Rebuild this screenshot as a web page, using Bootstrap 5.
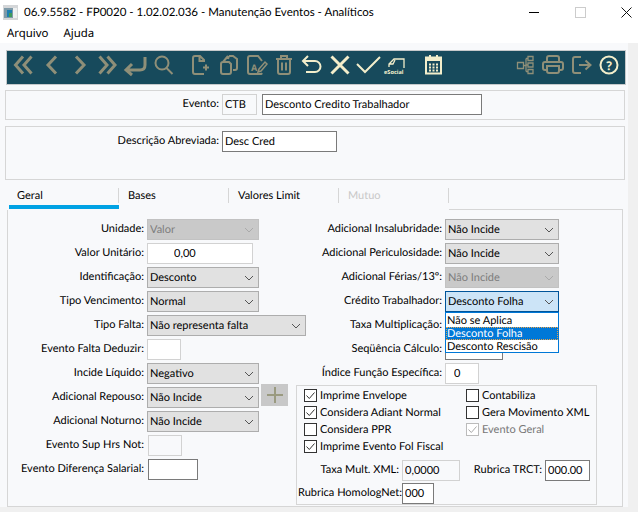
<!DOCTYPE html>
<html lang="pt"><head><meta charset="utf-8"><title>Manutenção Eventos</title>
<link rel="stylesheet" href="https://cdn.jsdelivr.net/npm/bootstrap@5.3.0/dist/css/bootstrap.min.css">
<style>
html,body{height:512px;overflow:hidden}
body{background:#f0f0f0;font-family:Lato,"Noto Sans",sans-serif;font-size:11px;color:#000;line-height:1.2;text-rendering:geometricPrecision}
input,select{text-rendering:geometricPrecision}
.titlebar{height:25px;background:#fff;padding-left:3px}
.titlebar .ttl{margin-left:6px;font-size:11.5px}
.winbtn{width:46px;height:25px}
.winbtn-last{width:24px;margin-left:11px}
.menubar{height:18px;background:#fff;padding-left:7px;gap:15px;font-size:11.4px;font-family:"Noto Sans",sans-serif}
.workarea{width:628px;height:464px;background:#f8f9fb;padding:7px 0 0 0}
.toolbar{height:35px;width:620px;margin-left:6px;background:#174a5c;border:1px solid #c6c9cb;padding:0 2px;overflow:hidden}
.tcell{width:28px;height:28px;flex:none}
.tgap{margin-left:9px}
.tb-d{fill:none;stroke:#8f8f78;stroke-width:2}
.tb-e{fill:none;stroke:#f3eecb;stroke-width:2}
.box1,.box2{margin-left:5px;width:620px;border:1px solid #d6d6d6}
.box1{height:30px;margin-top:5px;padding-top:3px}
.box2{height:54px;margin-top:6px;padding-top:4px}
.lbl{text-align:right;white-space:nowrap;flex:none;margin-right:3px;padding-top:3px}
.lb-ev{width:213px}
.fld.form-control,.fld.form-select{height:21px;min-height:21px;border-radius:0;padding:0 0 0 2px;font-size:11px;line-height:19px;color:#000;flex:none;box-shadow:none}
.fld.form-control{background:#fff;border:1px solid #7a7a7a}
.fld.form-control.soft{border-color:#d2d2d2}
.fld.form-control.off{background:#f8f9fb;border-color:#d2d2d2}
.fld.form-control.val00{padding-left:26px}
.fld.form-control.idx0{padding-left:8px}
.fld.form-select{background-color:#e1e1e1;border:1px solid #adadad;background-position:right 4px center;background-size:10px 6px;padding-right:0;
background-image:url("data:image/svg+xml,%3csvg xmlns='http://www.w3.org/2000/svg' viewBox='0 0 10 6'%3e%3cpath fill='none' stroke='%23555' d='M1 1l4 4 4-4'/%3e%3c/svg%3e")}
.fld.form-select:disabled{background-color:#c9c9c9;border-color:#c2c2c2;color:#7d7d7d;
background-image:url("data:image/svg+xml,%3csvg xmlns='http://www.w3.org/2000/svg' viewBox='0 0 10 6'%3e%3cpath fill='none' stroke='%23aaa' d='M1 1l4 4 4-4'/%3e%3c/svg%3e")}
.fld.form-select.hot{background-color:#cce4f7;border-color:#005499}
.tabstrip{height:25px;margin:5px 0 0 7px;width:616px;padding-left:2px}
.tabitem{width:110px;height:24px;padding:4px 0 0 8px;border-bottom:4px solid transparent;position:relative;flex:none}
.tabitem+.tabitem{padding-left:9px}
.tabitem::after{content:"";position:absolute;right:0;top:3px;height:15px;width:1px;background:#d6d6d6}
.tabitem.on{border-bottom-color:#00a2e4}
.tabitem.off{color:#c8c8c8}
.tabfill{flex:1;border-bottom:1px solid #d6d6d6}
.tabpane{width:616px;margin-left:7px;height:297px;border:1px solid #d6d6d6;border-top:0;padding-top:9px}
.colleft{width:288px;flex:none}
.colright{width:301px;flex:none}
.frow{height:24px;flex:none}
.frow-last{height:22px}
.lb-l{width:136px}
.lb-r{width:146px}
.nudge1{margin-left:1px}
.w112{width:112px}.w106{width:106px}.w159{width:159px}.w34{width:34px}.w50{width:50px}.w114{width:114px}.w58{width:58px}
.sel-wrap{position:relative}
.ddmenu{position:absolute;left:149px;top:21px;width:114px;height:41px;background:#fff;border:1px solid #0078d7;z-index:5;padding-top:1px}
.dditem{height:13px;line-height:13px;padding-left:1px;white-space:nowrap}
.dditem.sel{background:#0078d7;color:#fff;outline:1px dotted #e8a24a;outline-offset:-1px}
.plusbtn{width:27px;height:22px;background:#c8c8c8;margin:-3px 0 0 2px;flex:none;border:0;padding:0;display:flex;align-items:center;justify-content:center}
.grp{height:120px;border:1px solid #d6d6d6;padding:1px 0 0 7px}
.chkcol1{width:162px;flex:none}
.chkrow{height:17px;gap:3px;white-space:nowrap}
.chk.form-check-input{width:13px;height:13px;margin:0;border-radius:0;border:1px solid #333;background-color:#fff;flex:none;opacity:1;box-shadow:none}
.chk.form-check-input:checked{background-color:#fff;border-color:#333;background-size:11px;background-image:url("data:image/svg+xml,%3csvg xmlns='http://www.w3.org/2000/svg' viewBox='0 0 11 11'%3e%3cpath fill='none' stroke='%23333' d='M1.5 5.5l2.8 3 5.2-6'/%3e%3c/svg%3e")}
.chk.form-check-input:disabled:checked{border-color:#bbb;background-image:url("data:image/svg+xml,%3csvg xmlns='http://www.w3.org/2000/svg' viewBox='0 0 11 11'%3e%3cpath fill='none' stroke='%23aaa' d='M1.5 5.5l2.8 3 5.2-6'/%3e%3c/svg%3e")}
.muted-lab{color:#777}
.grow1{margin:5px 0 0 -6px;height:23px}
.grow2{margin:0 0 0 -6px;height:23px}
.lb-g{width:101px}
.lb-t{width:82px}
.w45{width:45px}.w32{width:32px}
.esoc{font:bold 5.6px "Noto Sans",sans-serif;fill:#f3eecb;stroke:none}
.qm{font:bold 12px "Noto Sans",sans-serif;fill:#f3eecb;stroke:none}
.aa{font:bold 9px "Noto Sans",sans-serif;fill:#8f8f78;stroke:none}
</style></head>
<body>
<div class="titlebar d-flex align-items-center">
<svg width="15" height="15" viewBox="0 0 15 15"><rect width="15" height="15" fill="#d4d6d8"/><rect x="1" y="3" width="9" height="10" fill="#7f9aa8"/><rect x="4" y="5" width="5" height="7" fill="#1f7fb0"/><rect x="10" y="3" width="4" height="10" fill="#eef0f0"/><rect x="6" y="8" width="3" height="4" fill="#3f9a5a"/></svg>
<span class="ttl">06.9.5582 - FP0020 - 1.02.02.036 - Manutenção Eventos - Analíticos</span>
<div class="ms-auto d-flex">
<div class="winbtn d-flex align-items-center justify-content-center"><svg width="10" height="10"><path d="M0 4.5h10" stroke="#000"/></svg></div>
<div class="winbtn d-flex align-items-center justify-content-center"><svg width="11" height="11"><rect x=".5" y=".5" width="10" height="10" fill="none" stroke="#ccc"/></svg></div>
<div class="winbtn winbtn-last d-flex align-items-center justify-content-center"><svg width="11" height="11"><path d="M.5.5l10 10M10.5.5l-10 10" stroke="#111" fill="none"/></svg></div>
</div></div>
<div class="menubar d-flex align-items-center"><span>Arquivo</span><span>Ajuda</span></div>
<div class="workarea">
<div class="toolbar d-flex">
<svg class="tcell" viewBox="0 0 28 28"><path class="tb-d" style="stroke-width:3" d="M14 5.500L6.500 14l7.500 8.500M22.500 5.500L15 14l7.500 8.500"/></svg>
<svg class="tcell" viewBox="0 0 28 28"><path class="tb-d" style="stroke-width:3" d="M19 5.500L11 14l8 8.500"/></svg>
<svg class="tcell" viewBox="0 0 28 28"><path class="tb-d" style="stroke-width:3" d="M11 5.500l8 8.500-8 8.500"/></svg>
<svg class="tcell" viewBox="0 0 28 28"><path class="tb-d" style="stroke-width:3" d="M6.500 5.500L14 14l-7.500 8.500M14.500 5.500L22 14l-7.500 8.500"/></svg>
<svg class="tcell" viewBox="0 0 28 28"><path class="tb-d" style="stroke-width:3" d="M24 6v8q0 5-5 5H6M11 13l-6 6 6 5"/></svg>
<svg class="tcell" viewBox="0 0 28 28"><circle class="tb-d" cx="13" cy="12" r="6.500"/><path class="tb-d" d="M17.500 17l6 6"/></svg>
<svg class="tcell tgap" viewBox="0 0 28 28"><path class="tb-d" d="M18 11V9l-4-4H9a2 2 0 0 0-2 2v14a2 2 0 0 0 2 2h9M13.500 5v5H18M17 16.500h6M20 13.500v6"/></svg>
<svg class="tcell" viewBox="0 0 28 28"><path class="tb-d" d="M15 5h4l4 3v9a2 2 0 0 1-2 2h-2M15 5l-1 3M9 11h6l2 2v8a2 2 0 0 1-2 2H9a2 2 0 0 1-2-2v-8a2 2 0 0 1 2-2zM14 5l-5 6"/></svg>
<svg class="tcell" viewBox="0 0 28 28"><path class="tb-d" d="M20 10l-4-5H8a2 2 0 0 0-2 2v14a2 2 0 0 0 2 2h11a2 2 0 0 0 1-1"/><path class="tb-d" style="stroke-width:1.500" d="M17 18l6-7 2 2-6 7-3 1z"/><text class="aa" x="9" y="20">A</text></svg>
<svg class="tcell" viewBox="0 0 28 28"><path class="tb-d" d="M6 8h16M11 8V5h6v3M8 8v13a2 2 0 0 0 2 2h8a2 2 0 0 0 2-2V8M12 11.500v8M16 11.500v8"/></svg>
<svg class="tcell" viewBox="0 0 28 28"><path class="tb-e" d="M10 5L5 10l5 5M5 10h12a5.500 5.500 0 0 1 0 11H8"/></svg>
<svg class="tcell" viewBox="0 0 28 28"><path class="tb-e" style="stroke-width:3" d="M5.500 5.500l17 17M22.500 5.500l-17 17"/></svg>
<svg class="tcell" viewBox="0 0 28 28"><path class="tb-e" d="M3 13l8 8L26 6"/></svg>
<svg class="tcell" viewBox="0 0 28 28"><path class="tb-e" style="stroke-width:1.300" d="M7 16v-3l5-5h10v9M7 13h4l2-4"/><text class="esoc" x="2" y="23">eSocial</text></svg>
<svg class="tcell tgap" viewBox="0 0 28 28"><rect x="7" y="6.500" width="15" height="16" fill="none" stroke="#f3eecb" stroke-width="2"/><path d="M7 6h15v4H7z" fill="#f3eecb"/><path d="M11 4v3M18 4v3" stroke="#f3eecb" stroke-width="2"/><path d="M10 13.500h9M10 16.500h9M10 19.500h9" stroke="#f3eecb" stroke-width="2" stroke-dasharray="2 1.500"/></svg>
<div class="ms-auto d-flex">
<svg class="tcell" viewBox="0 0 28 28"><path class="tb-d" style="stroke-width:1.300" d="M6.500 11.500h6v6h-6zM17 5.500h5v4h-5zM17 12h5v4h-5zM17 18.500h5v4h-5zM12.500 14.500H15M15 7.500v13M15 7.500h2M15 14h2M15 20.500h2"/></svg>
<svg class="tcell" viewBox="0 0 28 28"><path class="tb-d" d="M8 11V7a2 2 0 0 1 2-2h8a2 2 0 0 1 2 2v4M8 19H6a2 2 0 0 1-2-2v-4a2 2 0 0 1 2-2h16a2 2 0 0 1 2 2v4a2 2 0 0 1-2 2h-2M8 15h12v5a2 2 0 0 1-2 2h-8a2 2 0 0 1-2-2z"/></svg>
<svg class="tcell" viewBox="0 0 28 28"><path class="tb-d" d="M14 6H8a2 2 0 0 0-2 2v12a2 2 0 0 0 2 2h6"/><path class="tb-d" d="M12 14h11M18.500 9.500L23.500 14l-5 4.500"/></svg>
<svg class="tcell" viewBox="0 0 28 28"><circle class="tb-e" cx="14" cy="14" r="8.500"/><text class="qm" x="14" y="18.500" text-anchor="middle">?</text></svg>
</div></div>
<div class="box1 d-flex"><span class="lbl lb-ev">Evento:</span><input class="form-control fld off" style="width:35px" value="CTB" disabled><input class="form-control fld" style="width:220px;margin-left:5px" value="Desconto Credito Trabalhador"></div>
<div class="box2 d-flex align-items-start"><span class="lbl lb-ev">Descrição Abreviada:</span><input class="form-control fld" style="width:115px" value="Desc Cred"></div>
<div class="tabstrip d-flex"><div class="tabitem on">Geral</div><div class="tabitem">Bases</div><div class="tabitem">Valores Limit</div><div class="tabitem off">Mutuo</div><div class="tabfill"></div></div>
<div class="tabpane d-flex">
<div class="colleft d-flex flex-column">
<div class="frow d-flex align-items-start"><span class="lbl lb-l">Unidade:</span><select class="form-select fld w112" disabled><option>Valor</option></select></div>
<div class="frow d-flex align-items-start"><span class="lbl lb-l">Valor Unitário:</span><input class="form-control fld soft w106 val00" value="0,00"></div>
<div class="frow d-flex align-items-start"><span class="lbl lb-l">Identificação:</span><select class="form-select fld w112"><option>Desconto</option></select></div>
<div class="frow d-flex align-items-start"><span class="lbl lb-l">Tipo Vencimento:</span><select class="form-select fld w112"><option>Normal</option></select></div>
<div class="frow d-flex align-items-start"><span class="lbl lb-l">Tipo Falta:</span><select class="form-select fld w159"><option>Não representa falta</option></select></div>
<div class="frow d-flex align-items-start"><span class="lbl lb-l">Evento Falta Deduzir:</span><input class="form-control fld soft w34"></div>
<div class="frow d-flex align-items-start"><span class="lbl lb-l">Incide Líquido:</span><select class="form-select fld w112"><option>Negativo</option></select></div>
<div class="frow d-flex align-items-start"><span class="lbl lb-l">Adicional Repouso:</span><select class="form-select fld w112"><option>Não Incide</option></select><button class="plusbtn" type="button" aria-label="Adicionar"><svg width="16" height="16"><path d="M8 0v16M0 8h16" stroke="#9a9a80" stroke-width="2"/></svg></button></div>
<div class="frow d-flex align-items-start"><span class="lbl lb-l">Adicional Noturno:</span><select class="form-select fld w112"><option>Não Incide</option></select></div>
<div class="frow d-flex align-items-start"><span class="lbl lb-l">Evento Sup Hrs Not:</span><input class="form-control fld off w34 nudge1" disabled></div>
<div class="frow d-flex align-items-start"><span class="lbl lb-l">Evento Diferença Salarial:</span><input class="form-control fld w50 nudge1"></div>
</div>
<div class="colright d-flex flex-column">
<div class="frow d-flex align-items-start"><span class="lbl lb-r">Adicional Insalubridade:</span><select class="form-select fld w114"><option>Não Incide</option></select></div>
<div class="frow d-flex align-items-start"><span class="lbl lb-r">Adicional Periculosidade:</span><select class="form-select fld w114"><option>Não Incide</option></select></div>
<div class="frow d-flex align-items-start"><span class="lbl lb-r">Adicional Férias/13º:</span><select class="form-select fld w114" disabled><option>Não Incide</option></select></div>
<div class="frow d-flex align-items-start sel-wrap"><span class="lbl lb-r">Crédito Trabalhador:</span><select class="form-select fld w114 hot"><option>Desconto Folha</option></select>
<div class="ddmenu"><div class="dditem">Não se Aplica</div><div class="dditem sel">Desconto Folha</div><div class="dditem">Desconto Rescisão</div></div></div>
<div class="frow d-flex align-items-start"><span class="lbl lb-r">Taxa Multiplicação:</span></div>
<div class="frow d-flex align-items-start"><span class="lbl lb-r">Seqüência Cálculo:</span><input class="form-control fld w58"></div>
<div class="frow frow-last d-flex align-items-start"><span class="lbl lb-r">Índice Função Específica:</span><input class="form-control fld soft w34 idx0" value="0"></div>
<div class="grp">
<div class="d-flex">
<div class="chkcol1">
<div class="chkrow d-flex align-items-center"><input class="form-check-input chk" type="checkbox" checked><span>Imprime Envelope</span></div>
<div class="chkrow d-flex align-items-center"><input class="form-check-input chk" type="checkbox" checked><span>Considera Adiant Normal</span></div>
<div class="chkrow d-flex align-items-center"><input class="form-check-input chk" type="checkbox"><span>Considera PPR</span></div>
<div class="chkrow d-flex align-items-center"><input class="form-check-input chk" type="checkbox" checked><span>Imprime Evento Fol Fiscal</span></div>
</div>
<div>
<div class="chkrow d-flex align-items-center"><input class="form-check-input chk" type="checkbox"><span>Contabiliza</span></div>
<div class="chkrow d-flex align-items-center"><input class="form-check-input chk" type="checkbox"><span>Gera Movimento XML</span></div>
<div class="chkrow d-flex align-items-center"><input class="form-check-input chk" type="checkbox" checked disabled><span class="muted-lab">Evento Geral</span></div>
</div>
</div>
<div class="d-flex grow1 align-items-start"><span class="lbl lb-g">Taxa Mult. XML:</span><input class="form-control fld off w58" value="0,0000" disabled><span class="lbl lb-t">Rubrica TRCT:</span><input class="form-control fld w45" value="000.00"></div>
<div class="d-flex grow2 align-items-start"><span class="lbl lb-g">Rubrica HomologNet:</span><input class="form-control fld w32" value="000"></div>
</div>
</div>
</div>
</div>
</body></html>
